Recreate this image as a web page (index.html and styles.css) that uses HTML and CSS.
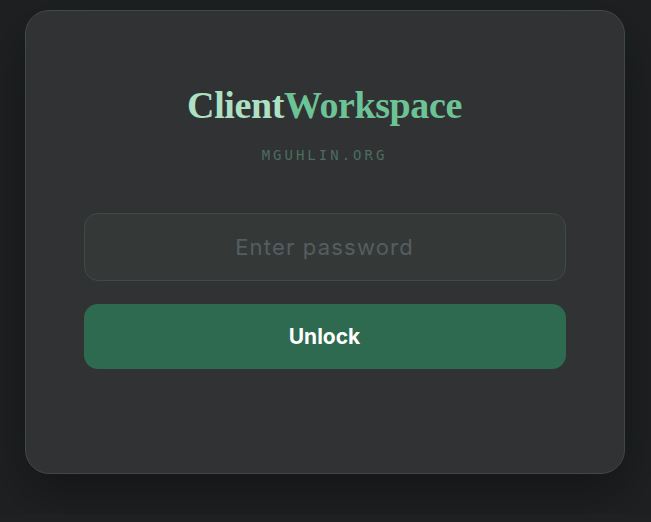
FILE: index.html
```html
<!DOCTYPE html>
<html>
<head>
	<title>Client Workspace</title>
	<meta charset="utf-8">
	<link rel="stylesheet" href="styles.css">
</head>
<body>
	<main class="card">
		<h1 class="brand"><span class="brand-client">Client</span><span class="brand-work">Workspace</span></h1>
		<p class="domain">MGUHLIN.ORG</p>
		<form class="login">
			<input class="password" type="password" placeholder="Enter password" autocomplete="off">
			<button class="unlock" type="button">Unlock</button>
		</form>
	</main>
</body>
</html>
```

FILE: styles.css
```css
html {
	background-color: #1f2022;
}

body {
	margin: 0;
	padding: 10px 2px 40px 0;
	font-family: "Inter", "Noto Sans", sans-serif;
	color: #e8e8e8;
}

.card {
	box-sizing: border-box;
	width: 600px;
	margin: 0 auto;
	padding: 71px 58px 104px;
	background-color: #313234;
	border: 1px solid #3e4a47;
	border-radius: 24px;
	box-shadow: 0 20px 50px rgba(0, 0, 0, 0.35);
}

.brand {
	margin: 0;
	text-align: center;
	font-family: "Liberation Serif", "DejaVu Serif", serif;
	font-size: 38px;
	font-weight: bold;
	line-height: 46px;
	letter-spacing: -0.4px;
}

.brand-client {
	color: #aee0c3;
}

.brand-work {
	color: #6cc396;
}

.domain {
	margin: 19px 0 0;
	text-align: center;
	font-family: "DejaVu Sans Mono", "Liberation Mono", monospace;
	font-size: 14px;
	letter-spacing: 3px;
	color: #4b6d5d;
}

.login {
	display: flex;
	flex-direction: column;
	gap: 23px;
	margin-top: 50px;
}

.password {
	box-sizing: border-box;
	height: 68px;
	padding: 0 16px;
	background-color: #343938;
	border: 1px solid #3f4a47;
	border-radius: 14px;
	text-align: center;
	font-family: inherit;
	font-size: 22px;
	letter-spacing: 1.2px;
	color: #ddd;
	outline: none;
}

.password::placeholder {
	color: #555d61;
}

.unlock {
	height: 65px;
	background-color: #2d6a4f;
	border: none;
	border-radius: 14px;
	color: #fff;
	font-family: inherit;
	font-size: 21px;
	font-weight: bold;
	cursor: pointer;
}
```
